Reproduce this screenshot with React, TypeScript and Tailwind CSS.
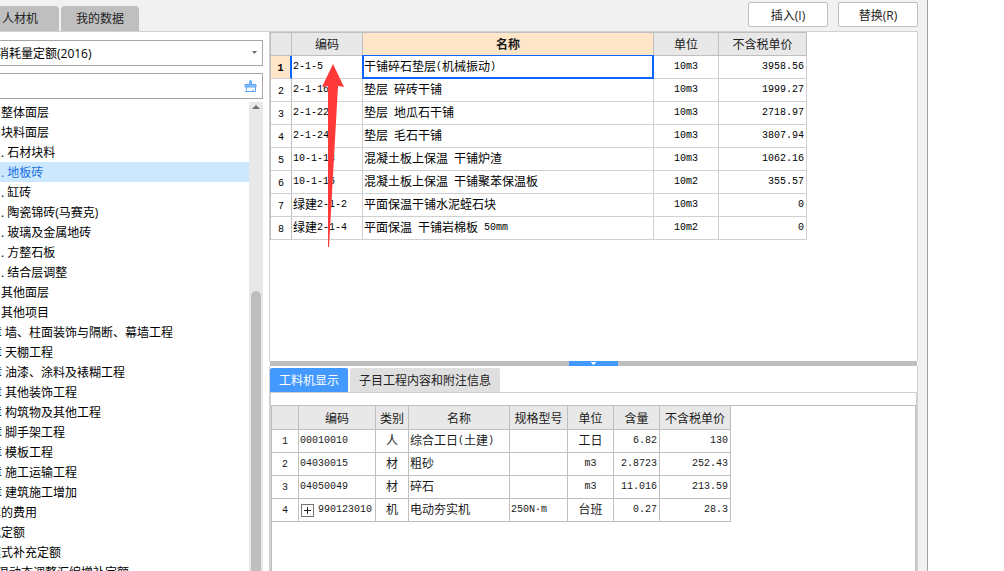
import React from 'react'

const tree = [
  { text: '整体面层', pad: 'pl-[13px]' },
  { text: '块料面层', pad: 'pl-[13px]' },
  { text: '. 石材块料', pad: 'pl-[13px]' },
  { text: '. 地板砖', pad: 'pl-[13px]', active: true },
  { text: '. 缸砖', pad: 'pl-[13px]' },
  { text: '. 陶瓷锦砖(马赛克)', pad: 'pl-[13px]' },
  { text: '. 玻璃及金属地砖', pad: 'pl-[13px]' },
  { text: '. 方整石板', pad: 'pl-[13px]' },
  { text: '. 结合层调整', pad: 'pl-[13px]' },
  { text: '其他面层', pad: 'pl-[13px]' },
  { text: '其他项目', pad: 'pl-[13px]' },
  { text: '章 墙、柱面装饰与隔断、幕墙工程', pad: 'pl-0.5' },
  { text: '章 天棚工程', pad: 'pl-0.5' },
  { text: '章 油漆、涂料及裱糊工程', pad: 'pl-0.5' },
  { text: '章 其他装饰工程', pad: 'pl-0.5' },
  { text: '章 构筑物及其他工程', pad: 'pl-0.5' },
  { text: '章 脚手架工程', pad: 'pl-0.5' },
  { text: '章 模板工程', pad: 'pl-0.5' },
  { text: '章 施工运输工程', pad: 'pl-0.5' },
  { text: '章 建筑施工增加', pad: 'pl-0.5' },
  { text: '算的费用', pad: 'pl-px' },
  { text: '充定额', pad: 'pl-px' },
  { text: '模式补充定额', pad: 'pl-px' },
  { text: '温动态调整汇编增补定额', pad: 'pl-[9px]' },
]

const quotas = [
  ['2-1-5', '干铺碎石垫层(机械振动)', '10m3', '3958.56'],
  ['2-1-16', '垫层 碎砖干铺', '10m3', '1999.27'],
  ['2-1-22', '垫层 地瓜石干铺', '10m3', '2718.97'],
  ['2-1-24', '垫层 毛石干铺', '10m3', '3807.94'],
  ['10-1-18', '混凝土板上保温 干铺炉渣', '10m3', '1062.16'],
  ['10-1-16', '混凝土板上保温 干铺聚苯保温板', '10m2', '355.57'],
  ['绿建2-1-2', '平面保温干铺水泥蛭石块', '10m3', '0'],
  ['绿建2-1-4', '平面保温 干铺岩棉板 50mm', '10m2', '0'],
]

const resources = [
  ['00010010', '人', '综合工日(土建)', '', '工日', '6.82', '130'],
  ['04030015', '材', '粗砂', '', 'm3', '2.8723', '252.43'],
  ['04050049', '材', '碎石', '', 'm3', '11.016', '213.59'],
  ['990123010', '机', '电动夯实机', '250N·m', '台班', '0.27', '28.3'],
]

// half-width runs use the monospace face, everything else the CJK one
function Txt({ children }: { children: string }) {
  return (
    <>
      {children.split(/([\x20-\x7e·]+)/).map((part, i) =>
        i % 2 ? (
          <span
            key={i}
            className="align-[2px] font-['Liberation_Mono',monospace] text-[10px] leading-none whitespace-pre"
          >
            {part}
          </span>
        ) : (
          part
        ),
      )}
    </>
  )
}

const th = 'border-r border-b border-[#bfbfbf] bg-[#e8e8e8] p-0 font-normal text-[#1a1a1a]'

export default function App() {
  return (
    <main className="flex h-screen overflow-hidden bg-white pr-[76px] font-['Open_Sans','Noto_Sans_CJK_SC',sans-serif] text-[12px] leading-4 text-black">
      <div className="flex min-w-0 flex-1 flex-col border-r border-[#a0a0a0] bg-[#f1f1f1]">
        {/* Top bar */}
        <header className="mr-[9px] flex h-8 shrink-0 items-end justify-between border-b border-[#d0d0d0]">
          <nav className="flex gap-0.5 text-[#222]">
            <button className="h-[25px] w-[59px] rounded-tr-sm bg-[#bfbfbf] pr-[19px]">人材机</button>
            <button className="h-[25px] w-[78px] rounded-t-sm bg-[#bfbfbf]">我的数据</button>
          </nav>
          <div className="flex gap-2.5 self-start pt-0.5 text-[#222]">
            <button className="h-[25px] w-20 rounded-xs border border-[#bfbfbf] bg-white pt-0.5">插入(I)</button>
            <button className="h-[25px] w-20 rounded-xs border border-[#bfbfbf] bg-white pt-0.5">替换(R)</button>
          </div>
        </header>
        {/* Top bar */}

        <div className="mr-[9px] flex min-h-0 flex-1 bg-white">
          {/* Sidebar */}
          <aside className="flex w-[269px] shrink-0 flex-col overflow-hidden pt-2 pr-1.5">
            <div className="relative -ml-2 h-[26px] shrink-0">
              <select
                aria-label="定额库"
                className="h-full w-full appearance-none border border-[#a6a6a6] bg-white pt-0.5 pl-1 outline-none"
              >
                <option>消耗量定额(2016)</option>
              </select>
              <svg className="pointer-events-none absolute top-[11px] right-1.5" width="5" height="3" viewBox="0 0 5 3">
                <path d="M0 0h5L2.5 3z" fill="#707070" />
              </svg>
            </div>
            <div className="relative mt-[7px] -ml-2 h-[26px] shrink-0">
              <input
                type="text"
                aria-label="搜索"
                className="h-full w-full border border-[#a6a6a6] bg-white px-2 outline-none"
              />
              <button aria-label="清除" className="absolute top-1.5 right-1.5">
                <svg width="13" height="13" viewBox="0 0 13 13" fill="none" stroke="#5aa5fa">
                  <path d="M5.5 5V2.5L6.500 1l1 1.500V5" fill="#8cc0fb" />
                  <path d="M1 5.500h11v2.500H1z" fill="#8cc0fb" />
                  <path d="M2.500 8v2.500l-1 2h10V8M8 12.500l1.500-2" />
                </svg>
              </button>
            </div>
            <div className="mt-[3px] flex min-h-0 flex-1">
              <ul className="-ml-3 min-w-0 flex-1">
                {tree.map((item) => (
                  <li key={item.text}>
                    <button
                      className={`block h-5 w-full pt-0.5 text-left whitespace-nowrap ${item.pad} ${
                        item.active ? 'bg-[#cce8ff] text-[#1a6fe0]' : ''
                      }`}
                    >
                      {item.text}
                    </button>
                  </li>
                ))}
              </ul>
              <div className="flex w-3.5 flex-col items-center bg-[#e8e8e8] pt-[3px]">
                <svg width="8" height="4" viewBox="0 0 8 4">
                  <path d="M4 0l4 4H0z" fill="#6e6e76" />
                </svg>
                <div className="mt-auto h-[280px] w-2.5 rounded-t-full bg-[#bfbfbf]" />
              </div>
            </div>
          </aside>
          {/* Sidebar */}

          <div className="flex min-w-0 flex-1 flex-col font-['Noto_Sans_CJK_SC',sans-serif]">
            {/* Quota list */}
            <section className="relative min-h-0 flex-1 overflow-hidden border-x border-[#d0d0d0]">
              <table className="w-[537px] table-fixed border-separate border-spacing-0 border-t border-l border-[#bfbfbf]">
                <thead>
                  <tr className="h-[23px]">
                    <th className={`${th} w-[21px]`}></th>
                    <th className={`${th} w-[71px]`}>编码</th>
                    <th className="w-[291px] border-r border-b border-[#bfbfbf] bg-[#ffe6c8] p-0 font-bold text-[#1a1a1a]">
                      名称
                    </th>
                    <th className={`${th} w-[65px]`}>单位</th>
                    <th className={`${th} w-[88px]`}>不含税单价</th>
                  </tr>
                </thead>
                <tbody>
                  {quotas.map(([code, name, unit, price], i) => (
                    <tr key={code} className="h-[23px] *:border-b *:border-[#d0d0d0] *:p-0 *:pb-0.5">
                      <td
                        className={`pt-1! pb-0! text-center font-['Liberation_Mono',monospace] text-[10px] ${
                          i === 0
                            ? 'border-r-2 border-r-[#0a64ff]! bg-[#ffe6c8] font-bold'
                            : 'border-r border-r-[#bfbfbf]!'
                        }`}
                      >
                        {i + 1}
                      </td>
                      <td className="border-r pl-px! whitespace-nowrap">
                        <Txt>{code}</Txt>
                      </td>
                      <td className="relative border-r pl-px! whitespace-nowrap">
                        <Txt>{name}</Txt>
                        {i === 0 && <span className="absolute -inset-px border-2 border-t border-[#0a64ff]" />}
                      </td>
                      <td className="border-r text-center">
                        <Txt>{unit}</Txt>
                      </td>
                      <td className="border-r pr-0.5! text-right">
                        <Txt>{price}</Txt>
                      </td>
                    </tr>
                  ))}
                </tbody>
              </table>
              <svg className="absolute top-8 left-[52px]" width="22" height="183" viewBox="0 0 22 183">
                <path d="M11 0l11 23-6-1-9 161h-1L6 22l-6 1z" fill="#ff3838" />
              </svg>
            </section>
            {/* Quota list */}

            {/* Splitter */}
            <div className="mx-px flex h-[5px] shrink-0 justify-center bg-[#bfbfbf]">
              <button aria-label="收起" className="flex w-[49px] items-center justify-center bg-[#4499ff]">
                <svg width="5" height="3" viewBox="0 0 5 3">
                  <path d="M0 0h5v1H4v1H3v1H2V2H1V1H0z" fill="#fff" />
                </svg>
              </button>
            </div>
            {/* Splitter */}

            {/* Details */}
            <section className="flex h-[205px] shrink-0 flex-col">
              <div className="flex gap-0.5 border-x border-b border-[#d0d0d0] pt-0.5 font-['Open_Sans','Noto_Sans_CJK_SC',sans-serif]">
                <button className="h-6 w-[78px] rounded-t-xs bg-[#4499ff] pt-0.5 text-white">工料机显示</button>
                <button className="h-6 w-[150px] rounded-t-xs bg-[#dfdfdf] pt-0.5 text-[#222]">
                  子目工程内容和附注信息
                </button>
              </div>
              <div className="flex min-h-0 flex-1 flex-col border-x-2 border-[#d0d0d0] pt-3 text-[#1a1a1a]">
                <div className="flex-1 border-x border-t border-[#bfbfbf]">
                  <table className="w-[459px] table-fixed border-separate border-spacing-0">
                    <thead>
                      <tr className="h-6">
                        <th className={`${th} w-[27px]`}></th>
                        <th className={`${th} w-[77px]`}>编码</th>
                        <th className={`${th} w-[33px]`}>类别</th>
                        <th className={`${th} w-[101px]`}>名称</th>
                        <th className={`${th} w-[58px]`}>规格型号</th>
                        <th className={`${th} w-[46px]`}>单位</th>
                        <th className={`${th} w-[46px]`}>含量</th>
                        <th className={th}>不含税单价</th>
                      </tr>
                    </thead>
                    <tbody>
                      {resources.map(([code, kind, name, spec, unit, amount, price], i) => (
                        <tr
                          key={code}
                          className="h-[23px] *:border-r *:border-b *:border-[#bfbfbf] *:p-0 *:pb-0.5 *:whitespace-nowrap"
                        >
                          <td className="pt-0.5! pb-0! text-center font-['Liberation_Mono',monospace] text-[10px]">
                            {i + 1}
                          </td>
                          <td className="pb-0! pl-px!">
                            <div className="flex items-center gap-1">
                              {i === 3 && (
                                <button aria-label="展开" className="ml-px border border-[#777]">
                                  <svg width="11" height="11" viewBox="0 0 11 11" stroke="#222">
                                    <path d="M2 5.5h7M5.5 2v7" />
                                  </svg>
                                </button>
                              )}
                              <Txt>{code}</Txt>
                            </div>
                          </td>
                          <td className="text-center">{kind}</td>
                          <td className="pl-px!">
                            <Txt>{name}</Txt>
                          </td>
                          <td className="pl-px!">
                            <Txt>{spec}</Txt>
                          </td>
                          <td className="text-center">
                            <Txt>{unit}</Txt>
                          </td>
                          <td className="pr-0.5! text-right">
                            <Txt>{amount}</Txt>
                          </td>
                          <td className="pr-0.5! text-right">
                            <Txt>{price}</Txt>
                          </td>
                        </tr>
                      ))}
                    </tbody>
                  </table>
                </div>
              </div>
            </section>
            {/* Details */}
          </div>
        </div>
      </div>
    </main>
  )
}
